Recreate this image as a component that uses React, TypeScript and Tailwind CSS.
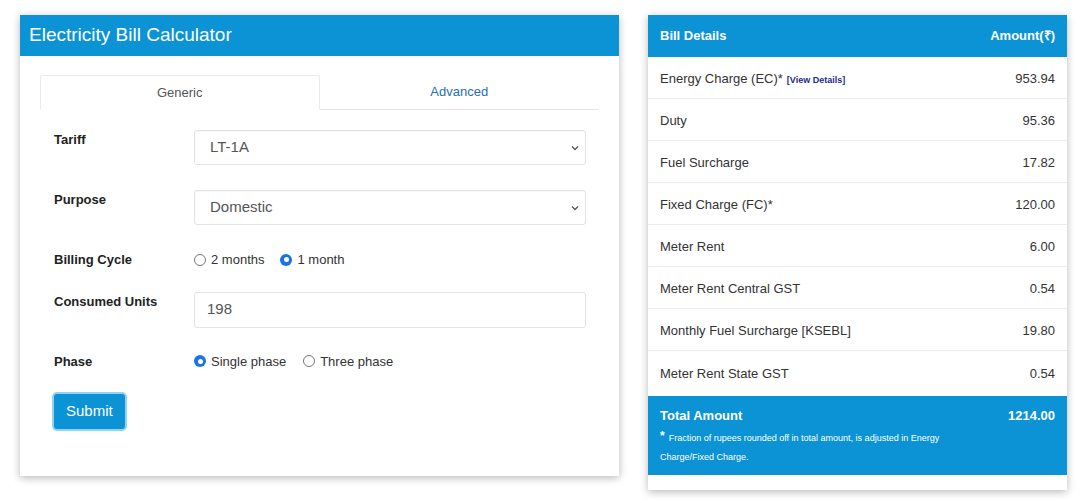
import type { FC } from "react"

const rows: [string, string][] = [
  ["Energy Charge (EC)*", "953.94"],
  ["Duty", "95.36"],
  ["Fuel Surcharge", "17.82"],
  ["Fixed Charge (FC)*", "120.00"],
  ["Meter Rent", "6.00"],
  ["Meter Rent Central GST", "0.54"],
  ["Monthly Fuel Surcharge [KSEBL]", "19.80"],
  ["Meter Rent State GST", "0.54"],
]

const Radio: FC<{ checked?: boolean; label: string }> = ({ checked, label }) => (
  <label className="flex items-center gap-[5px]">
    {checked ? (
      <span className="flex h-[12px] w-[12px] items-center justify-center rounded-full bg-[#1a73e8]">
        <span className="h-[5px] w-[5px] rounded-full bg-white" />
      </span>
    ) : (
      <span className="h-[12px] w-[12px] rounded-full border border-[#767676] bg-white" />
    )}
    <span>{label}</span>
  </label>
)

const Chevron = () => (
  <svg width="10" height="10" viewBox="0 0 10 10" className="text-[#555]">
    <path d="M2 3.5 L5 6.5 L8 3.5" fill="none" stroke="currentColor" strokeWidth="1.3" />
  </svg>
)

const Select: FC<{ value: string }> = ({ value }) => (
  <div className="flex h-[35px] w-[392px] items-center justify-between rounded-[3px] border border-[#e3e3e3] bg-white pl-[15px] pr-[5px] text-[15px] text-[#555] shadow-[inset_0_1px_1px_rgba(0,0,0,0.04)]">
    <span>{value}</span>
    <Chevron />
  </div>
)

const FormRow: FC<{ label: string; className?: string; children: React.ReactNode }> = ({
  label,
  className = "",
  children,
}) => (
  <div className={`flex ${className}`}>
    <div className="w-[140px] text-[13px] font-bold text-[#222]">{label}</div>
    {children}
  </div>
)

const Calculator = () => (
  <div className="h-[461px] w-[599px] bg-white shadow-[0_2px_8px_rgba(0,0,0,0.28)]">
    <div className="flex h-[41px] items-center bg-[#0b93d6] pl-[9px] text-[19px] text-white">
      Electricity Bill Calculator
    </div>
    <div className="px-[20px] pt-[19px]">
      <div className="flex h-[35px] border-b border-[#e6e6e6]">
        <div className="-mb-px flex w-[280px] items-center justify-center rounded-t-[3px] border border-b-white border-[#eaeaea] bg-white text-[13px] text-[#555]">
          Generic
        </div>
        <div className="flex w-[280px] items-center justify-center text-[13px] text-[#2a6eb0]">
          Advanced
        </div>
      </div>
      <div className="pl-[14px] pt-[20px] text-[13px] text-[#333]">
        <FormRow label="Tariff" className="items-start">
          <Select value="LT-1A" />
        </FormRow>
        <FormRow label="Purpose" className="mt-[25px] items-start">
          <Select value="Domestic" />
        </FormRow>
        <FormRow label="Billing Cycle" className="mt-[25px] items-center">
          <div className="flex items-center gap-[16px] text-[13px] text-[#333]">
            <Radio label="2 months" />
            <Radio checked label="1 month" />
          </div>
        </FormRow>
        <FormRow label="Consumed Units" className="mt-[22px] items-start">
          <div className="flex h-[36px] w-[392px] items-center rounded-[3px] border border-[#e3e3e3] pl-[12px] text-[15px] text-[#555]">
            198
          </div>
        </FormRow>
        <FormRow label="Phase" className="mt-[24px] items-center">
          <div className="flex items-center gap-[17px] text-[13px] text-[#333]">
            <Radio checked label="Single phase" />
            <Radio label="Three phase" />
          </div>
        </FormRow>
        <button className="mt-[23px] h-[35px] rounded-[3px] bg-[#0b93d6] px-[12px] text-[15px] text-white ring-2 ring-[#8fd3f5]">
          Submit
        </button>
      </div>
    </div>
  </div>
)

const BillDetails = () => (
  <div className="h-[475px] w-[419px] bg-white shadow-[0_2px_8px_rgba(0,0,0,0.28)]">
    <div className="flex h-[42px] items-center justify-between bg-[#0b93d6] px-[12px] text-[13px] font-bold text-white">
      <span>Bill Details</span>
      <span>Amount(₹)</span>
    </div>
    {rows.map(([label, amount], i) => (
      <div
        key={label}
        className={`flex h-[42px] items-center justify-between px-[12px] pt-[3px] text-[13px] text-[#333] ${
          i < rows.length - 1 ? "border-b border-[#ececec]" : ""
        }`}
      >
        <span>
          {label}
          {i === 0 && (
            <span className="ml-[4px] text-[9px] font-bold text-[#1f2a8a]">[View Details]</span>
          )}
        </span>
        <span>{amount}</span>
      </div>
    ))}
    <div className="mt-[3px] h-[79px] bg-[#0b93d6] px-[12px] pt-[10px] text-white">
      <div className="flex justify-between text-[13px] font-bold">
        <span>Total Amount</span>
        <span>1214.00</span>
      </div>
      <div className="mt-[3px] text-[9px] leading-[19px]">
        <span className="mr-[4px] align-top text-[12px] font-bold leading-[14px]">*</span>
        Fraction of rupees rounded off in total amount, is adjusted in Energy
        <br />
        Charge/Fixed Charge.
      </div>
    </div>
  </div>
)

export default function App() {
  return (
    <div
      className="flex h-[503px] w-[1080px] items-start bg-white pl-[20px] pt-[15px]"
      style={{ fontFamily: '"Liberation Sans", Arial, sans-serif' }}
    >
      <Calculator />
      <div className="ml-[29px]">
        <BillDetails />
      </div>
    </div>
  )
}
